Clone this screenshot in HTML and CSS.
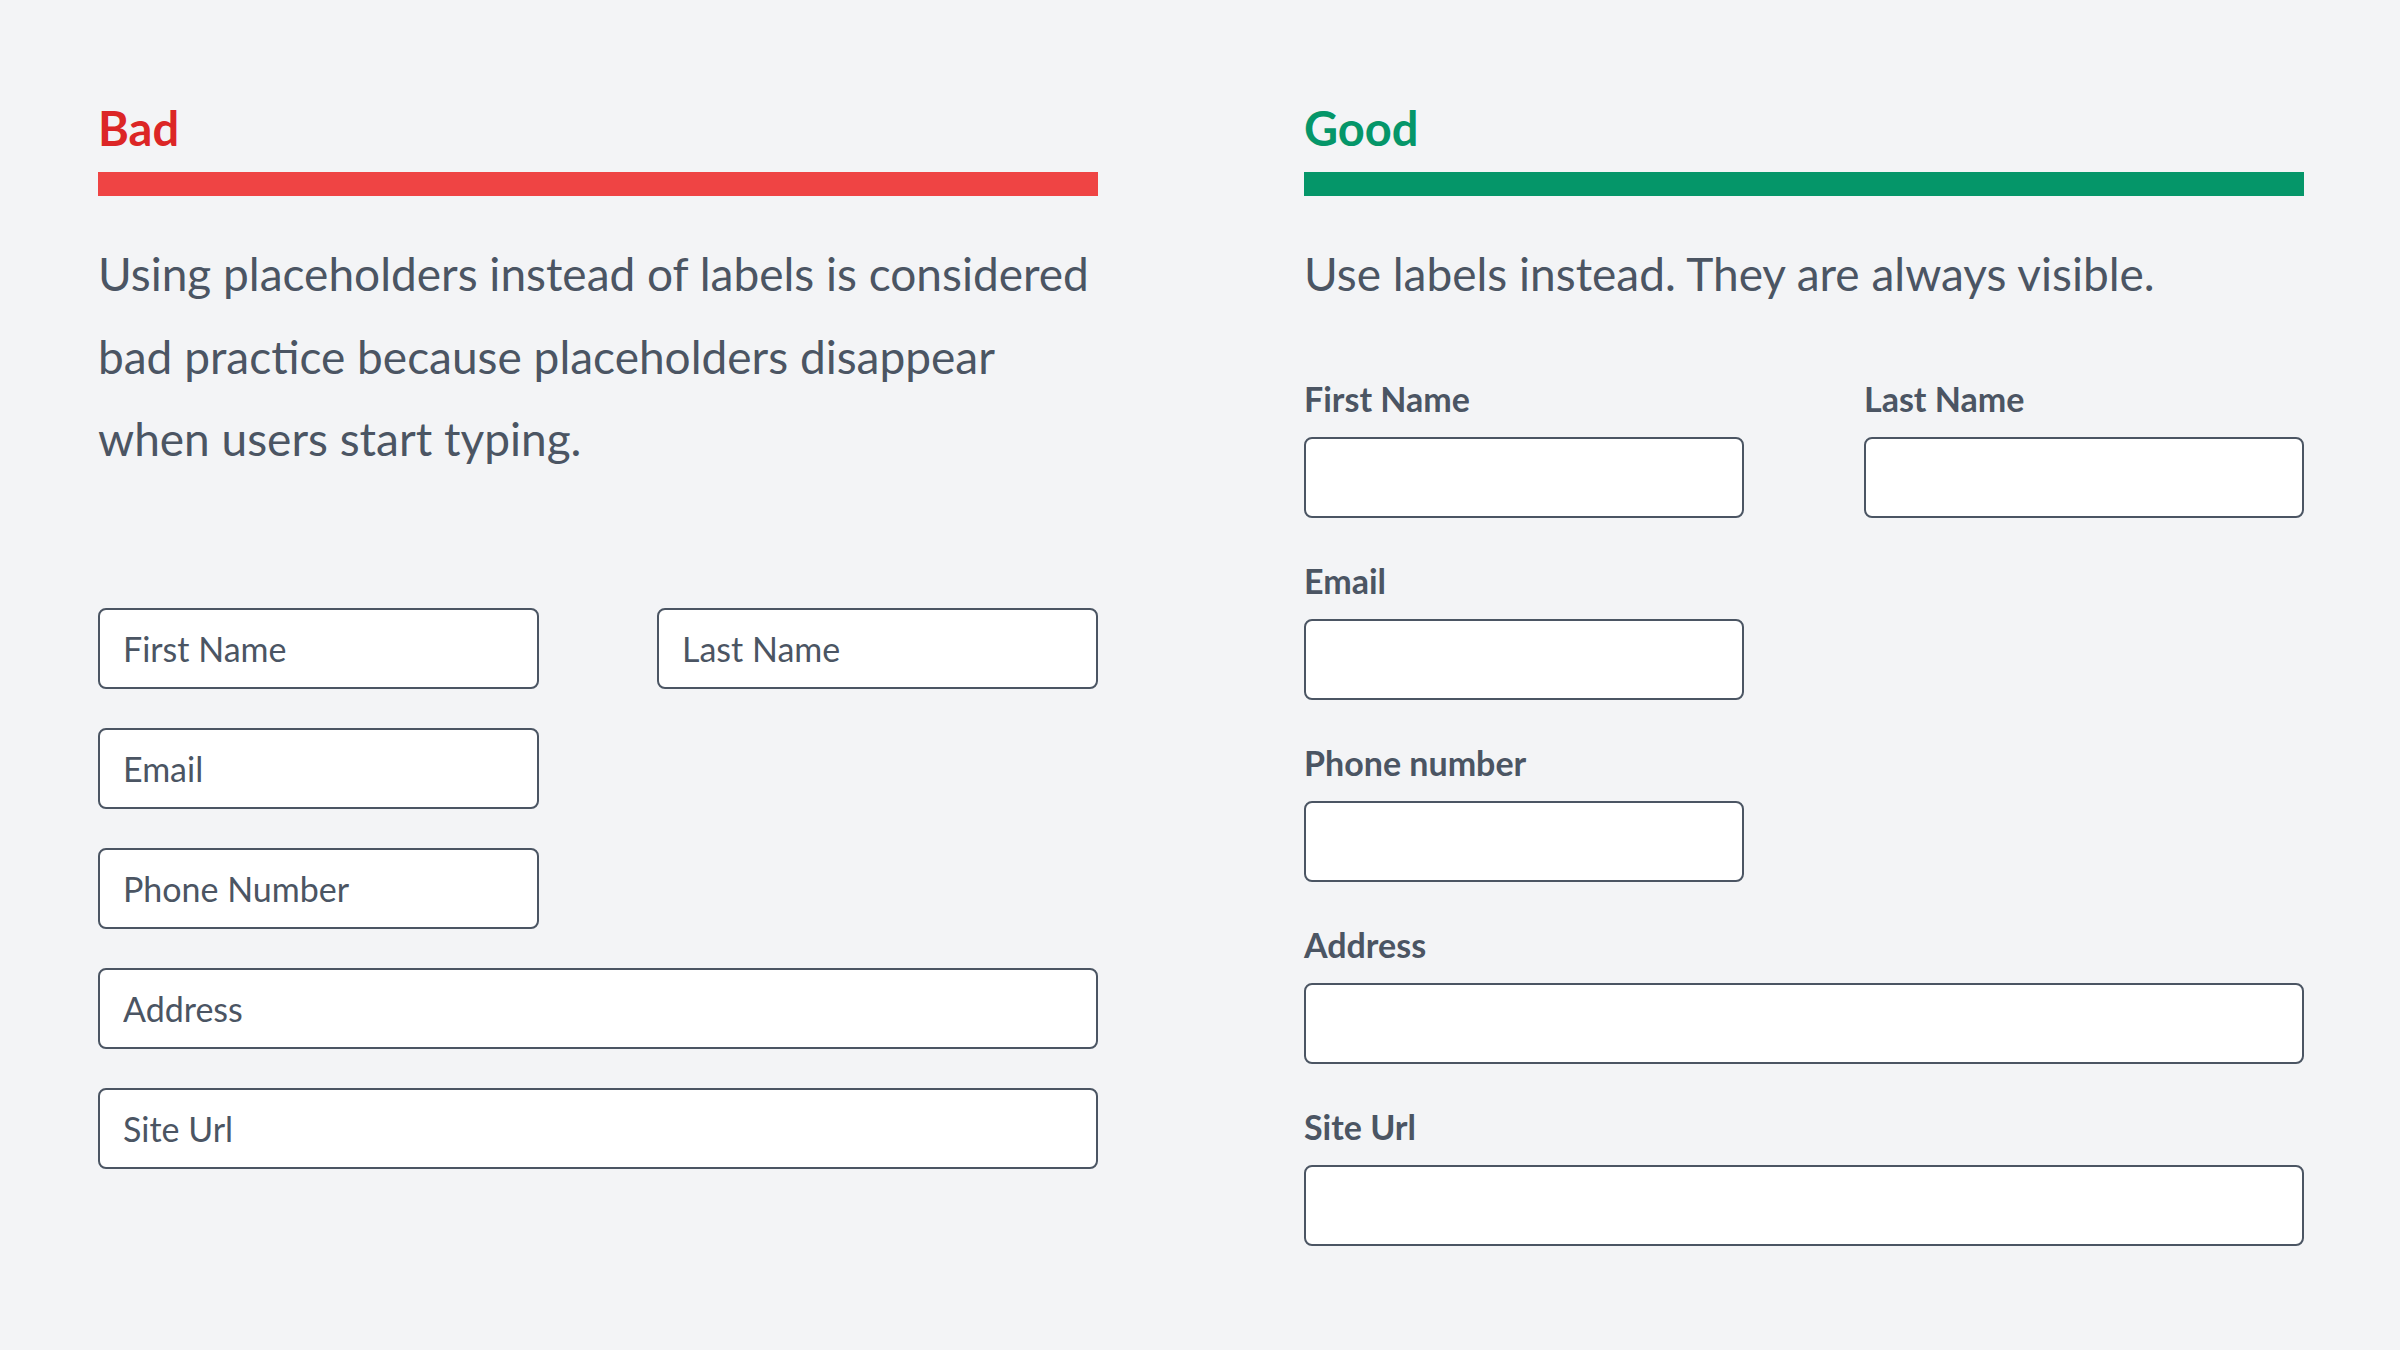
FILE: index.html
```html
<!DOCTYPE html>
<html lang="en">
<head>
<meta charset="utf-8">
<title>Labels vs placeholders</title>
<link rel="stylesheet" href="styles.css">
</head>
<body>
<main class="page">
  <section class="col">
    <h2 class="title title-bad">Bad</h2>
    <div class="bar bar-bad"></div>
    <p class="desc">Using placeholders instead of labels is considered bad practice because placeholders disappear when users start typing.</p>
    <form class="bad-form">
      <input class="field" type="text" placeholder="First Name">
      <input class="field" type="text" placeholder="Last Name">
      <input class="field" type="text" placeholder="Email">
      <div></div>
      <input class="field" type="text" placeholder="Phone Number">
      <div></div>
      <input class="field wide" type="text" placeholder="Address">
      <input class="field wide" type="text" placeholder="Site Url">
    </form>
  </section>
  <section class="col">
    <h2 class="title title-good">Good</h2>
    <div class="bar bar-good"></div>
    <p class="desc">Use labels instead. They are always visible.</p>
    <form class="good-form">
      <label class="group"><span class="lbl">First Name</span><input class="field" type="text"></label>
      <label class="group"><span class="lbl">Last Name</span><input class="field" type="text"></label>
      <label class="group"><span class="lbl">Email</span><input class="field" type="text"></label>
      <div></div>
      <label class="group"><span class="lbl">Phone number</span><input class="field" type="text"></label>
      <div></div>
      <label class="group wide"><span class="lbl">Address</span><input class="field" type="text"></label>
      <label class="group wide"><span class="lbl">Site Url</span><input class="field" type="text"></label>
    </form>
  </section>
</main>
</body>
</html>
```

FILE: styles.css
```css
* { box-sizing: border-box; }
html, body { margin: 0; padding: 0; }
body {
  background: #f3f4f6;
  color: #4b5563;
  font-family: "Lato", "Open Sans", sans-serif;
  width: 2400px;
  height: 1350px;
  overflow: hidden;
}
.page {
  display: flex;
  gap: 206px;
  padding: 104px 96px 0 98px;
}
.col {
  width: 1000px;
  display: flex;
  flex-direction: column;
}
.title {
  margin: 0;
  font-size: 47px;
  line-height: 48px;
  font-weight: 700;
}
.title-bad { color: #dc2626; }
.title-good { color: #059669; }
.bar {
  height: 24px;
  margin-top: 20px;
}
.bar-bad { background: #ef4444; }
.bar-good { background: #059669; }
.desc {
  margin: 37px 0 0;
  font-size: 46px;
  line-height: 82.5px;
  color: #4b5563;
}
.field {
  display: block;
  width: 100%;
  height: 81px;
  border: 2px solid #4b5563;
  border-radius: 8px;
  background: #ffffff;
  padding: 0 23px;
  font-family: inherit;
  font-size: 34px;
  color: #4b5563;
  outline: none;
}
.field::placeholder { color: #4b5563; opacity: 1; }
.bad-form {
  margin-top: 127px;
  display: grid;
  grid-template-columns: 441px 441px;
  column-gap: 118px;
  row-gap: 39px;
}
.wide { grid-column: 1 / -1; }
.good-form {
  margin-top: 61px;
  display: grid;
  grid-template-columns: 440px 440px;
  column-gap: 120px;
  row-gap: 41px;
}
.group {
  display: flex;
  flex-direction: column;
  gap: 17px;
}
.lbl {
  font-size: 34px;
  line-height: 43px;
  font-weight: 700;
  color: #4b5563;
}
```
